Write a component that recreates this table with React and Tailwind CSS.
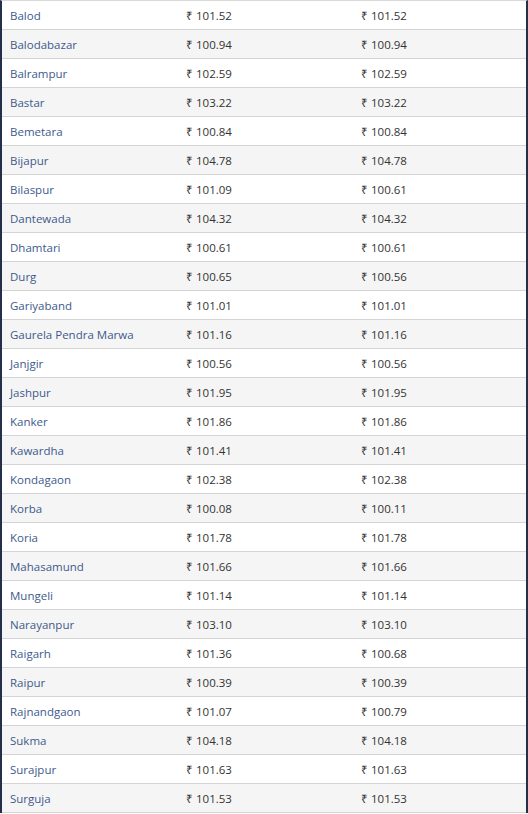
const rows = [
  ["Balod", "101.52", "101.52"],
  ["Balodabazar", "100.94", "100.94"],
  ["Balrampur", "102.59", "102.59"],
  ["Bastar", "103.22", "103.22"],
  ["Bemetara", "100.84", "100.84"],
  ["Bijapur", "104.78", "104.78"],
  ["Bilaspur", "101.09", "100.61"],
  ["Dantewada", "104.32", "104.32"],
  ["Dhamtari", "100.61", "100.61"],
  ["Durg", "100.65", "100.56"],
  ["Gariyaband", "101.01", "101.01"],
  ["Gaurela Pendra Marwa", "101.16", "101.16"],
  ["Janjgir", "100.56", "100.56"],
  ["Jashpur", "101.95", "101.95"],
  ["Kanker", "101.86", "101.86"],
  ["Kawardha", "101.41", "101.41"],
  ["Kondagaon", "102.38", "102.38"],
  ["Korba", "100.08", "100.11"],
  ["Koria", "101.78", "101.78"],
  ["Mahasamund", "101.66", "101.66"],
  ["Mungeli", "101.14", "101.14"],
  ["Narayanpur", "103.10", "103.10"],
  ["Raigarh", "101.36", "100.68"],
  ["Raipur", "100.39", "100.39"],
  ["Rajnandgaon", "101.07", "100.79"],
  ["Sukma", "104.18", "104.18"],
  ["Surajpur", "101.63", "101.63"],
  ["Surguja", "101.53", "101.53"],
];

export default function App() {
  return (
    <div className="w-[528px] h-[814px] bg-white font-['Open_Sans',sans-serif] text-[11.5px]">
      <div className="border-t border-[#d9d9d9] border-l-2 border-l-[#24304a] border-r-2 border-r-[#24304a]">
        {rows.map(([city, a, b], i) => (
          <div
            key={city}
            className={`grid grid-cols-[176px_175px_1fr] h-[29px] pt-[2px] items-center border-b border-[#d4d4d4] ${
              i % 2 === 1 ? "bg-[#f5f5f5]" : "bg-white"
            }`}
          >
            <span className="pl-2 text-[#3d5a8c]">{city}</span>
            <span className="pl-2 text-[#333333]">₹ {a}</span>
            <span className="pl-2 text-[#333333]">₹ {b}</span>
          </div>
        ))}
      </div>
    </div>
  );
}
